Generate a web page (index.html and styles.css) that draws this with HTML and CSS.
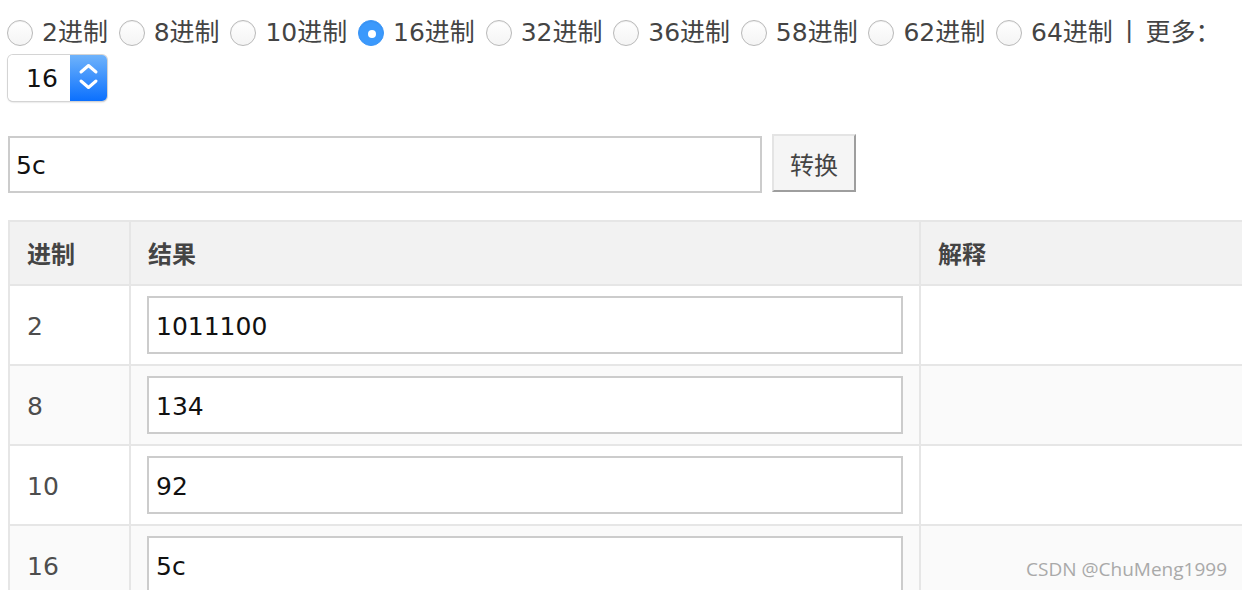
FILE: index.html
```html
<!DOCTYPE html>
<html lang="zh-CN">
<head>
<meta charset="utf-8">
<title>进制转换</title>
<link rel="stylesheet" href="styles.css">
</head>
<body>
<div class="bases">
  <label class="opt"><input type="radio" name="base" class="radio"><span>2进制</span></label>
  <label class="opt"><input type="radio" name="base" class="radio"><span>8进制</span></label>
  <label class="opt"><input type="radio" name="base" class="radio"><span>10进制</span></label>
  <label class="opt"><input type="radio" name="base" class="radio" checked><span>16进制</span></label>
  <label class="opt"><input type="radio" name="base" class="radio"><span>32进制</span></label>
  <label class="opt"><input type="radio" name="base" class="radio"><span>36进制</span></label>
  <label class="opt"><input type="radio" name="base" class="radio"><span>58进制</span></label>
  <label class="opt"><input type="radio" name="base" class="radio"><span>62进制</span></label>
  <label class="opt"><input type="radio" name="base" class="radio"><span>64进制</span></label>
  <span class="sep">丨</span>
  <span class="more">更多：</span>
  <div class="select">
    <select class="select-native"><option>16</option></select>
    <span class="select-btn">
      <svg width="37" height="46" viewBox="0 0 37 46"><path d="M11 17 L18.5 10.5 L26 17" fill="none" stroke="#fff" stroke-width="3" stroke-linecap="round" stroke-linejoin="round"/><path d="M11 26 L18.5 32.5 L26 26" fill="none" stroke="#fff" stroke-width="3" stroke-linecap="round" stroke-linejoin="round"/></svg>
    </span>
  </div>
</div>

<div class="form">
  <input class="main-input" type="text" value="5c">
  <button class="btn" type="button">转换</button>
</div>

<table class="result">
  <colgroup><col class="c1"><col class="c2"><col class="c3"></colgroup>
  <thead>
    <tr><th>进制</th><th>结果</th><th>解释</th></tr>
  </thead>
  <tbody>
    <tr><td>2</td><td><input class="cell-input" type="text" value="1011100"></td><td></td></tr>
    <tr><td>8</td><td><input class="cell-input" type="text" value="134"></td><td></td></tr>
    <tr><td>10</td><td><input class="cell-input" type="text" value="92"></td><td></td></tr>
    <tr><td>16</td><td><input class="cell-input" type="text" value="5c"></td><td></td></tr>
  </tbody>
</table>

<div class="watermark">CSDN @ChuMeng1999</div>
</body>
</html>
```

FILE: styles.css
```css
html, body {
  margin: 0;
  padding: 0;
  overflow: hidden;
  background: #fff;
}
body {
  font-family: "DejaVu Sans", "Noto Sans CJK SC", sans-serif;
  font-size: 25px;
  color: #444;
  width: 1242px;
  height: 590px;
  position: relative;
}
.bases {
  display: flex;
  flex-wrap: wrap;
  align-items: center;
  padding: 11px 0 0 7px;
  column-gap: 10.8px;
}
.opt {
  display: flex;
  align-items: center;
  gap: 9px;
  height: 44px;
  line-height: 44px;
}
.radio {
  appearance: none;
  -webkit-appearance: none;
  margin: 0;
  width: 26px;
  height: 26px;
  border-radius: 50%;
  border: 1px solid #b9b9b9;
  background: linear-gradient(#ffffff, #f4f4f4);
  box-shadow: inset 0 1px 1px rgba(0,0,0,0.06);
  box-sizing: border-box;
  position: relative;
  flex: none;
}
.radio:checked {
  border-color: #3a95f7;
  background: #3b99fc;
}
.radio:checked::after {
  content: "";
  position: absolute;
  left: 9px;
  top: 9px;
  width: 8px;
  height: 8px;
  border-radius: 50%;
  background: #fff;
}
.sep {
  height: 44px;
  line-height: 44px;
  margin-left: -7px;
  margin-right: -7px;
}
.more {
  height: 44px;
  line-height: 44px;
}
.select {
  display: flex;
  width: 99px;
  height: 46px;
  border-radius: 5px;
  box-shadow: 0 0 0 1px #d4d4d4, 0 1px 2px rgba(0,0,0,0.25);
  overflow: hidden;
  margin-left: 1px;
}
.select-native {
  appearance: none;
  -webkit-appearance: none;
  border: none;
  outline: none;
  background: #fff;
  width: 62px;
  height: 46px;
  margin: 0;
  padding: 0 0 0 18px;
  font-family: "DejaVu Sans", sans-serif;
  font-size: 25px;
  color: #111;
}
.select-btn {
  display: block;
  width: 37px;
  height: 46px;
  background: linear-gradient(#6fb3fb, #0b70fe);
}
.select-btn svg {
  display: block;
}
.form {
  display: flex;
  align-items: flex-start;
  margin: 33px 0 0 8px;
  gap: 10px;
}
.main-input {
  width: 754px;
  height: 57px;
  box-sizing: border-box;
  margin: 2px 0 0;
  border: 2px solid #cccccc;
  padding: 2px 6px 0;
  font-family: "DejaVu Sans", sans-serif;
  font-size: 25px;
  color: #111;
  outline: none;
}
.btn {
  width: 84px;
  height: 58px;
  box-sizing: border-box;
  margin: 0;
  background: #f5f5f5;
  border: 2px solid;
  border-color: #e4e4e4 #9e9e9e #9e9e9e #e4e4e4;
  font-family: "Noto Sans CJK SC", sans-serif;
  font-size: 24px;
  color: #444;
  padding: 0;
}
.result {
  margin: 27px 0 0 8px;
  border-collapse: collapse;
  table-layout: fixed;
  width: 1270px;
  border: 2px solid #e6e6e6;
}
.c1 { width: 121px; }
.c2 { width: 790px; }
.result th, .result td {
  border: 2px solid #e6e6e6;
  text-align: left;
  vertical-align: middle;
}
.result th {
  background: #f2f2f2;
  font-family: "Noto Sans CJK SC", sans-serif;
  font-weight: bold;
  font-size: 24px;
  color: #444;
  padding: 16px 17px;
  line-height: 30px;
}
.result td {
  padding: 10px 16px;
  font-size: 25px;
  line-height: 30px;
  color: #4d4d4d;
}
.result td:first-child {
  padding-left: 17px;
  padding-top: 12px;
  padding-bottom: 8px;
}
.result tbody tr:nth-child(even) td {
  background: #fafafa;
}
.cell-input {
  display: block;
  width: 100%;
  height: 58px;
  box-sizing: border-box;
  margin: 0;
  border: 2px solid #cccccc;
  padding: 2px 7px 0;
  font-family: "DejaVu Sans", sans-serif;
  font-size: 25px;
  color: #111;
  background: #fff;
  outline: none;
}
.watermark {
  position: absolute;
  right: 15px;
  bottom: 8px;
  font-family: "Open Sans", sans-serif;
  font-size: 19px;
  color: #a9a9a9;
}
```
